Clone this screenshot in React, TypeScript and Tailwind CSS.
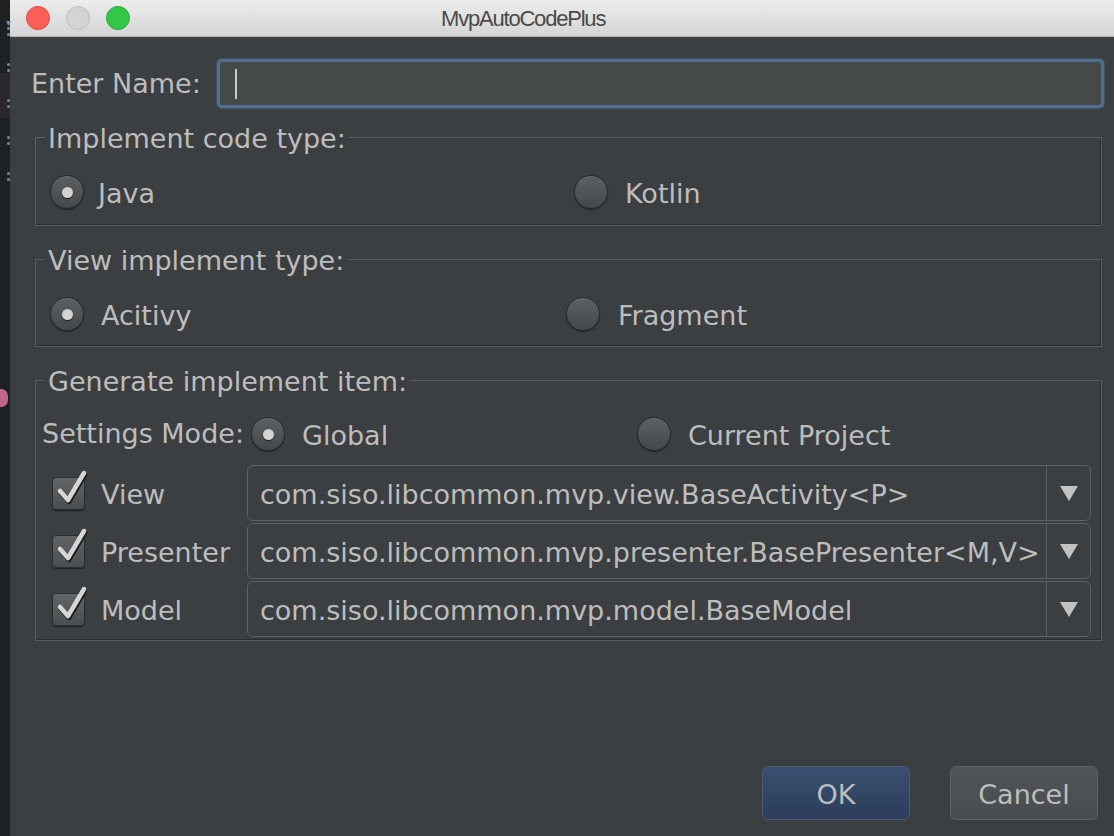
import React from "react";

const F = "font-['DejaVu_Sans',sans-serif]";
const T = "text-[27px] text-[#bdbdbd] pt-[4px] leading-[32px] whitespace-nowrap";

function Radio({ checked }: { checked?: boolean }) {
  return (
    <div className="w-[34px] h-[34px] shrink-0 rounded-full border border-[#262829] bg-gradient-to-b from-[#5d6062] to-[#45484a] shadow-[0_1px_1px_rgba(0,0,0,0.5),inset_0_1px_0_rgba(255,255,255,0.08)] flex items-center justify-center">
      {checked && (
        <div className="w-[11px] h-[11px] rounded-full bg-[#d2d2d2] shadow-[0_1px_1px_rgba(0,0,0,0.6)]" />
      )}
    </div>
  );
}

function Check() {
  return (
    <div className="relative w-[33px] h-[33px] shrink-0 rounded-[4px] border border-[#2c2e30] bg-gradient-to-b from-[#626567] to-[#4b4e50] shadow-[0_1px_1px_rgba(0,0,0,0.5)]">
      <svg className="absolute left-[4px] top-[-9px] overflow-visible" width="30" height="38" viewBox="0 0 30 38">
        <path d="M3 22 L11 31 L27 4" fill="none" stroke="#1c1d1e" strokeWidth="4.5" strokeLinecap="round" strokeLinejoin="round" transform="translate(1,2)" />
        <path d="M3 22 L11 31 L27 4" fill="none" stroke="#d6d6d6" strokeWidth="4.5" strokeLinecap="round" strokeLinejoin="round" />
      </svg>
    </div>
  );
}

function Group({ title, children, className }: { title: string; children: React.ReactNode; className?: string }) {
  return (
    <div className={"ml-[25px] mr-[12px] flex flex-col " + (className ?? "")}>
      <div className="flex h-[30px] items-stretch">
        <div className="w-[10px] flex flex-col">
          <div className="h-[15px]" />
          <div className="flex-1 border-t border-l border-[#5b5e60]" />
        </div>
        <div className="px-[3px] flex items-center">
          <span className={T}>{title}</span>
        </div>
        <div className="flex-1 flex flex-col">
          <div className="h-[15px]" />
          <div className="flex-1 border-t border-r border-[#5b5e60] shadow-[inset_-1px_0_0_#2b2d2e]" />
        </div>
      </div>
      <div className="border-l border-r border-b border-[#5b5e60] shadow-[inset_-1px_-1px_0_#2b2d2e]">
        {children}
      </div>
    </div>
  );
}

function Combo({ text }: { text: string }) {
  return (
    <div className="flex-1 h-[56px] flex rounded-[6px] border border-[#5e6163] bg-[#3c3f41]">
      <div className="flex-1 flex items-center pl-[12px] overflow-hidden">
        <span className={T}>{text}</span>
      </div>
      <div className="w-[44px] border-l border-[#5e6163] flex items-center justify-center">
        <svg width="18" height="16" viewBox="0 0 18 16">
          <path d="M0 1 L18 1 L9 16 Z" fill="#c2c2c2" />
        </svg>
      </div>
    </div>
  );
}

function Row({ label, text }: { label: string; text: string }) {
  return (
    <div className="flex items-center h-[56px]">
      <div className="w-[211px] shrink-0 flex items-center pl-[16px]">
        <Check />
        <span className={"ml-[16px] " + T}>{label}</span>
      </div>
      <Combo text={text} />
      <div className="w-[10px] shrink-0" />
    </div>
  );
}

export default function App() {
  return (
    <div className={"w-[1114px] h-[836px] flex overflow-hidden " + F}>
      {/* editor strip behind */}
      <div className="w-[10px] shrink-0 bg-[#1e2124] flex flex-col relative">
        <div className="h-[73px]" />
        <div className="h-[45px] bg-[#2b2730]" />
        <div className="absolute left-[6px] top-[18px] text-[10px] leading-none text-[#7f8c96]">▾</div>
        {[27, 33, 63, 69, 99, 105, 136, 142, 172, 178].map((y) => (
          <div key={y} className="absolute left-[7px] w-[3px] h-[3px] rounded-full bg-[#7d8a94]" style={{ top: y }} />
        ))}
        <div className="absolute left-[-6px] top-[389px] w-[14px] h-[18px] rounded-full bg-[#c0668a]" />
      </div>

      {/* window */}
      <div className="flex-1 flex flex-col bg-[#3c3f41]">
        {/* title bar */}
        <div className="h-[37px] shrink-0 flex items-center bg-gradient-to-b from-[#ededed] to-[#d5d5d5] border-b border-[#b5b5b5] pl-[16px]">
          <div className="w-[24px] h-[24px] rounded-full bg-[#fc5f57] border border-[#df4a44]" />
          <div className="w-[24px] h-[24px] rounded-full bg-[#d4d4d4] border border-[#bdbdbd] ml-[16px]" />
          <div className="w-[24px] h-[24px] rounded-full bg-[#33c748] border border-[#26a83a] ml-[16px]" />
          <div className="ml-[311px] pt-[1px] font-['Liberation_Sans',sans-serif] text-[22px] tracking-[-1.2px] text-[#4a4a4a]">MvpAutoCodePlus</div>
        </div>

        {/* name row */}
        <div className="mt-[22px] h-[49px] flex items-center pl-[21px] pr-[10px]">
          <div className="w-[186px] shrink-0">
            <span className={T}>Enter Name:</span>
          </div>
          <div className="flex-1 h-[49px] rounded-[5px] border-[3px] border-[#4d6f92] bg-[#45494a] shadow-[0_0_2px_#5a7ea3] flex items-center pl-[15px]">
            <div className="w-[2px] h-[30px] bg-[#c8c8c8]" />
          </div>
        </div>

        <Group title="Implement code type:" className="mt-[14px]">
          <div className="flex items-center h-[34px] pl-[14px] mt-[23px] mb-[16px]">
            <div className="w-[524px] flex items-center">
              <Radio checked />
              <span className={"ml-[14px] " + T}>Java</span>
            </div>
            <div className="flex items-center">
              <Radio />
              <span className={"ml-[17px] " + T}>Kotlin</span>
            </div>
          </div>
        </Group>

        <Group title="View implement type:" className="mt-[18px]">
          <div className="flex items-center h-[34px] pl-[14px] mt-[23px] mb-[15px]">
            <div className="w-[516px] flex items-center">
              <Radio checked />
              <span className={"ml-[17px] " + T}>Acitivy</span>
            </div>
            <div className="flex items-center">
              <Radio />
              <span className={"ml-[18px] " + T}>Fragment</span>
            </div>
          </div>
        </Group>

        <Group title="Generate implement item:" className="mt-[18px]">
          <div className="flex items-center h-[34px] pl-[6px] mt-[22px]">
            <div className="w-[209px] shrink-0">
              <span className={T}>Settings Mode:</span>
            </div>
            <div className="w-[386px] flex items-center">
              <Radio checked />
              <span className={"ml-[17px] " + T}>Global</span>
            </div>
            <div className="flex items-center">
              <Radio />
              <span className={"ml-[17px] " + T}>Current Project</span>
            </div>
          </div>
          <div className="mt-[14px] mb-[3px] flex flex-col gap-[2px]">
            <Row label="View" text="com.siso.libcommon.mvp.view.BaseActivity<P>" />
            <Row label="Presenter" text="com.siso.libcommon.mvp.presenter.BasePresenter<M,V>" />
            <Row label="Model" text="com.siso.libcommon.mvp.model.BaseModel" />
          </div>
        </Group>

        <div className="flex-1" />

        <div className="flex justify-end gap-[40px] pr-[16px] pb-[16px]">
          <button className="w-[148px] h-[54px] rounded-[6px] border border-[#4a5a72] bg-gradient-to-b from-[#3a4f70] to-[#2b3d5a] flex items-center justify-center">
            <span className={T}>OK</span>
          </button>
          <button className="w-[148px] h-[54px] rounded-[6px] border border-[#5f6264] bg-gradient-to-b from-[#505456] to-[#4a4d4f] flex items-center justify-center">
            <span className={T}>Cancel</span>
          </button>
        </div>
      </div>
    </div>
  );
}
